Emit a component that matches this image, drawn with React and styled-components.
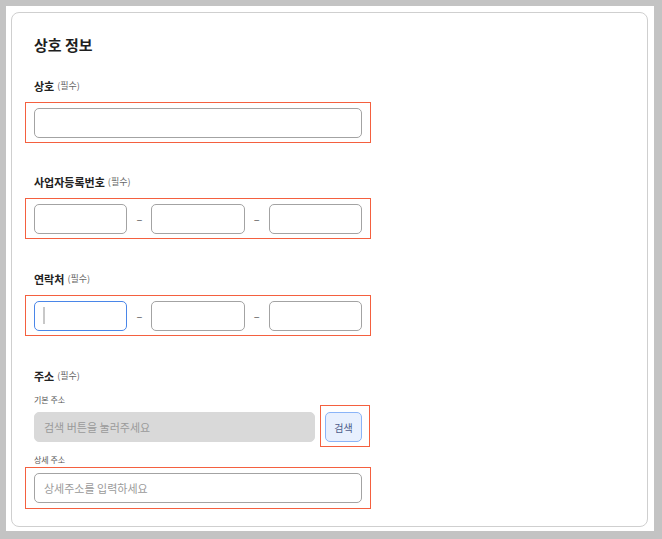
import React from "react";
import styled, { createGlobalStyle } from "styled-components";

const Global = createGlobalStyle`
  html, body { margin: 0; padding: 0; background: #c3c3c3; }
  body { font-family: "Noto Sans CJK KR", "Noto Sans", sans-serif; color: #222; }
  * { box-sizing: border-box; }
`;

const Frame = styled.div`
  margin: 6px 8px 8px 6px;
  background: #fff;
  padding: 6px 6px 4px 5px;
  height: 525px;
`;

const Card = styled.div`
  border: 1px solid #cfcfcf;
  border-radius: 8px;
  height: 515px;
  padding: 22px 22px 16px 22px;
  display: flex;
  flex-direction: column;
`;

const Title = styled.h2`
  margin: 0;
  font-size: 15px;
  line-height: 20px;
  height: 20px;
  font-weight: 700;
  color: #1f1f1f;
`;

const Section = styled.div`
  display: flex;
  flex-direction: column;
  margin-top: ${(p) => p.$top}px;
`;

const Label = styled.div`
  display: flex;
  align-items: center;
  height: 16px;
  font-size: 11px;
  line-height: 16px;
  font-weight: 700;
  color: #222;
  margin-bottom: 8px;
`;

const Req = styled.span`
  font-size: 9px;
  line-height: 16px;
  font-weight: 400;
  color: #666;
  margin-left: 3px;
`;

const SubLabel = styled.div`
  height: 12px;
  font-size: 8px;
  line-height: 12px;
  color: #555;
  margin-top: ${(p) => p.$top || 0}px;
  margin-bottom: ${(p) => p.$bottom || 0}px;
`;

const Highlight = styled.div`
  border: 1px solid #f4603f;
  margin-left: -9px;
  width: 346px;
  padding: ${(p) => p.$pad || "5px 8px 4px 8px"};
`;

const Input = styled.input`
  display: block;
  width: 100%;
  height: 30px;
  border: 1px solid #a3a3a3;
  border-radius: 5px;
  padding: 0 9px;
  font-family: inherit;
  font-size: 11px;
  color: #222;
  background: ${(p) => (p.$disabled ? "#d9d9d9" : "#fff")};
  border-color: ${(p) => (p.$disabled ? "#d9d9d9" : p.$focus ? "#4a86e8" : "#a3a3a3")};
  outline: none;
  &::placeholder { color: #9a9a9a; }
`;

const Split = styled.div`
  display: flex;
  align-items: center;
`;

const Cell = styled.div`
  flex: 1;
  position: relative;
`;

const Dash = styled.span`
  width: 24px;
  text-align: center;
  font-size: 11px;
  color: #555;
`;

const Caret = styled.span`
  position: absolute;
  left: 9px;
  top: 6px;
  width: 2px;
  height: 17px;
  background: #c8c8c8;
`;

const AddressRow = styled.div`
  display: flex;
  align-items: flex-start;
`;

const Grow = styled.div`
  width: 281px;
  flex-shrink: 0;
`;

const ButtonBox = styled.div`
  flex-shrink: 0;
  margin-left: 5px;
  margin-top: -7px;
  border: 1px solid #f4603f;
  padding: 6px 7px 4px 4px;
`;

const SearchButton = styled.button`
  display: block;
  width: 37px;
  height: 30px;
  border: 1px solid #8ab4f8;
  border-radius: 5px;
  background: #e8f0fe;
  color: #4d5c8a;
  font-family: inherit;
  font-size: 10px;
  padding: 0;
`;

function TripleInput({ focusFirst }) {
  return (
    <Split>
      <Cell>
        <Input $focus={focusFirst} />
        {focusFirst && <Caret />}
      </Cell>
      <Dash>–</Dash>
      <Cell>
        <Input />
      </Cell>
      <Dash>–</Dash>
      <Cell>
        <Input />
      </Cell>
    </Split>
  );
}

export default function App() {
  return (
    <>
      <Global />
      <Frame>
        <Card>
          <Title>상호 정보</Title>
          <Section $top={23}>
            <Label>
              상호<Req>(필수)</Req>
            </Label>
            <Highlight>
              <Input />
            </Highlight>
          </Section>
          <Section $top={31}>
            <Label>
              사업자등록번호<Req>(필수)</Req>
            </Label>
            <Highlight>
              <TripleInput />
            </Highlight>
          </Section>
          <Section $top={32}>
            <Label>
              연락처<Req>(필수)</Req>
            </Label>
            <Highlight>
              <TripleInput focusFirst />
            </Highlight>
          </Section>
          <Section $top={32}>
            <Label>
              주소<Req>(필수)</Req>
            </Label>
            <SubLabel $top={2} $bottom={6}>기본 주소</SubLabel>
            <AddressRow>
              <Grow>
                <Input $disabled placeholder="검색 버튼을 눌러주세요" readOnly />
              </Grow>
              <ButtonBox>
                <SearchButton>검색</SearchButton>
              </ButtonBox>
            </AddressRow>
            <SubLabel $top={7} $bottom={1}>상세 주소</SubLabel>
            <Highlight $pad="5px 8px 5px 8px">
              <Input placeholder="상세주소를 입력하세요" />
            </Highlight>
          </Section>
        </Card>
      </Frame>
    </>
  );
}
